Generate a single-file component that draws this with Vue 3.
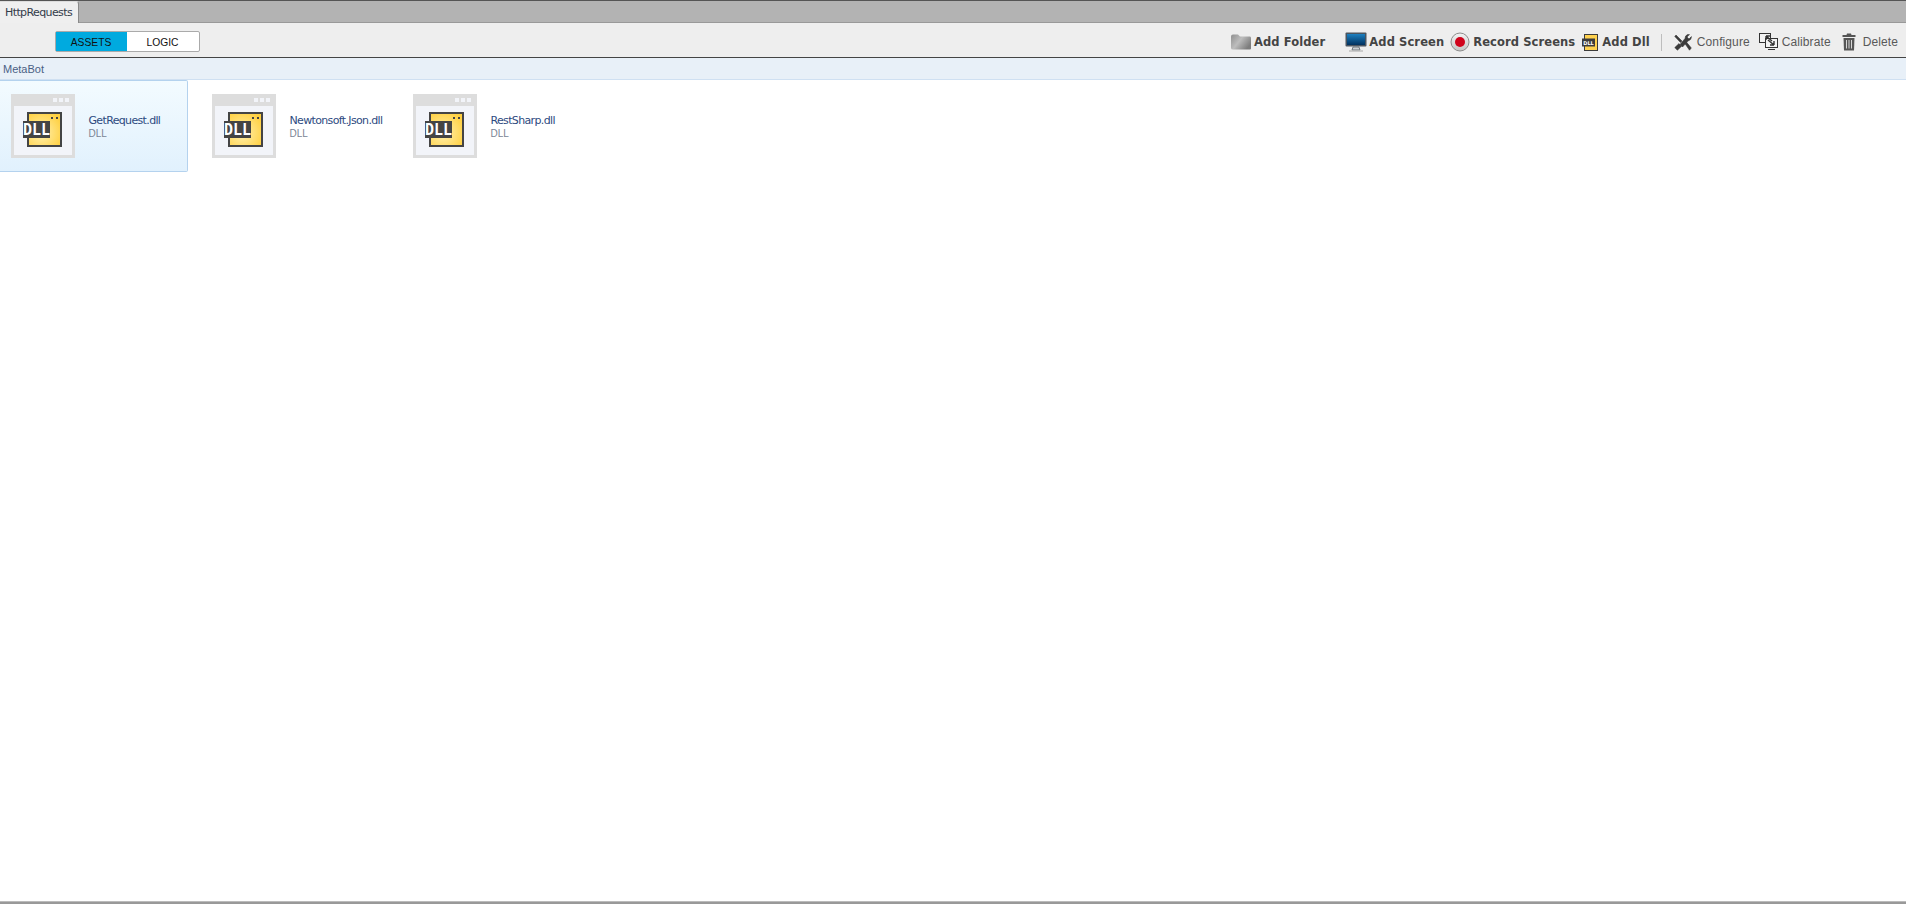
<script setup>
const items = [
  { name: 'GetRequest.dll', selected: true },
  { name: 'Newtonsoft.Json.dll', selected: false },
  { name: 'RestSharp.dll', selected: false }
]
</script>

<template>
  <div class="page">
    <div class="tabbar">
      <div class="tab">HttpRequests</div>
    </div>
    <div class="toolbar">
      <div class="toggle">
        <div class="seg on">ASSETS</div>
        <div class="seg">LOGIC</div>
      </div>
      <div class="actions">
        <div class="act bold a-folder">
          <svg width="22" height="18" viewBox="0 0 22 18">
            <defs><linearGradient id="fg" x1="0" y1="0" x2="1" y2="0.6"><stop offset="0" stop-color="#8f8f8f"/><stop offset="0.5" stop-color="#bdbdbd"/><stop offset="1" stop-color="#7d7d7d"/></linearGradient></defs>
            <path d="M1 3.5 Q1 1.5 3 1.5 H8 L10 3.5 H20 Q21 3.5 21 5 V15.5 Q21 16.5 20 16.5 H3 Q1 16.5 1 15 Z" fill="url(#fg)"/>
          </svg>
          <span>Add Folder</span>
        </div>
        <div class="act bold a-screen">
          <svg width="22" height="20" viewBox="0 0 22 20">
            <defs><linearGradient id="sg" x1="0" y1="0" x2="0" y2="1"><stop offset="0" stop-color="#1d80c0"/><stop offset="1" stop-color="#00315f"/></linearGradient></defs>
            <rect x="0.5" y="0.5" width="21" height="14" rx="1" fill="#4a5560"/>
            <rect x="2" y="2" width="18" height="11" fill="url(#sg)"/>
            <path d="M8 15 H14 L15 18 H7 Z" fill="#c9ced2" stroke="#59636b" stroke-width="0.8"/>
            <rect x="4" y="18.4" width="14" height="1.2" fill="#b5b5b5"/>
          </svg>
          <span>Add Screen</span>
        </div>
        <div class="act bold a-record">
          <svg width="20" height="20" viewBox="0 0 20 20">
            <defs><linearGradient id="rg" x1="0" y1="0" x2="0" y2="1"><stop offset="0" stop-color="#f4f4f4"/><stop offset="1" stop-color="#c4c4c4"/></linearGradient></defs>
            <circle cx="10" cy="10" r="9" fill="url(#rg)" stroke="#8d8d8d"/>
            <circle cx="10" cy="10" r="5" fill="#d0021b"/>
          </svg>
          <span>Record Screens</span>
        </div>
        <div class="act bold a-dll">
          <svg width="16" height="17" viewBox="0 0 16 17">
            <rect x="2.5" y="0.5" width="13" height="16" fill="#ffd24f" stroke="#3c3c3c"/>
            <rect x="0" y="4.5" width="13" height="8" fill="#3c3c3c"/>
            <text x="6.5" y="10.8" class="mini">DLL</text>
          </svg>
          <span>Add Dll</span>
        </div>
        <div class="sep"></div>
        <div class="act a-conf">
          <svg width="18" height="17" viewBox="0 0 18 17">
            <path d="M2 1 L8 7 L6.5 8.5 L0.8 2.5 Z M6 10.5 L11 4.5 Q11 1.5 13.5 0.6 L15.5 0.6 L13 3 L15 5 L17.4 2.6 Q17.6 6 14 7 L8.5 13 Z" fill="#3a3a3a" stroke="#3a3a3a" stroke-width="0.6"/>
            <path d="M10.5 9 L12 7.6 L17.3 14 L15.5 16.2 Z M0.8 13.6 L5 9.6 L7.5 12.3 L3.4 16.2 Z" fill="#3a3a3a" stroke="#3a3a3a" stroke-width="0.6"/>
          </svg>
          <span>Configure</span>
        </div>
        <div class="act a-cal">
          <svg width="19" height="18" viewBox="0 0 19 18">
            <rect x="0.5" y="0.5" width="11" height="9" fill="#f2f2f2" stroke="#333"/>
            <rect x="6.5" y="5.5" width="12" height="9" fill="#f2f2f2" stroke="#333"/>
            <path d="M7 3 L13 8 M7 3 V7 M7 3 H11 M15 12 L9 7 M15 12 V8 M15 12 H11" stroke="#333" stroke-width="1.4" fill="none"/>
            <path d="M9 16.5 H16" stroke="#333"/>
          </svg>
          <span>Calibrate</span>
        </div>
        <div class="act a-del">
          <svg width="14" height="18" viewBox="0 0 14 18">
            <path d="M5 0.5 H9 L9.5 2 H13.5 V4 H0.5 V2 H4.5 Z" fill="#555"/>
            <path d="M1.5 5 H12.5 L12 17.5 H2 Z" fill="#555"/>
            <path d="M4.5 7 V15.5 M7 7 V15.5 M9.5 7 V15.5" stroke="#d6d6d6" stroke-width="1"/>
          </svg>
          <span>Delete</span>
        </div>
      </div>
    </div>
    <div class="crumb">MetaBot</div>
    <div class="list">
      <div v-for="item in items" :key="item.name" class="item" :class="{ selected: item.selected }">
        <svg class="ficon" width="64" height="64" viewBox="0 0 64 64">
          <defs>
            <radialGradient id="dg" cx="0.4" cy="0.6" r="0.7"><stop offset="0" stop-color="#fff0b0"/><stop offset="1" stop-color="#ffd040"/></radialGradient>
          </defs>
          <rect width="64" height="64" fill="#dddddd"/>
          <rect x="3" y="12" width="58" height="49" fill="#f2f4f9"/>
          <rect x="42" y="4" width="4" height="4" fill="#f2f4f9"/>
          <rect x="48" y="4" width="4" height="4" fill="#f2f4f9"/>
          <rect x="54" y="4" width="4" height="4" fill="#f2f4f9"/>
          <rect x="17" y="19" width="33" height="33" fill="url(#dg)" stroke="#444" stroke-width="2"/>
          <rect x="40" y="23" width="2" height="2" fill="#444"/>
          <rect x="45" y="23" width="2" height="2" fill="#444"/>
          <rect x="12" y="27" width="27" height="17" fill="#444"/>
          <text x="25.5" y="41" class="dll">DLL</text>
        </svg>
        <div class="meta">
          <div class="name">{{ item.name }}</div>
          <div class="type">DLL</div>
        </div>
      </div>
    </div>
    <div class="foot"></div>
  </div>
</template>

<style>
html, body { margin: 0; padding: 0; background: #fff; overflow: hidden; }
</style>

<style scoped>
.page {
  width: 1906px;
  height: 904px;
  display: flex;
  flex-direction: column;
  font-family: "Liberation Sans", Arial, sans-serif;
  background: #fff;
  overflow: hidden;
}
.tabbar {
  flex: none;
  background: #b3b3b3;
  border-top: 1px solid #555;
  border-bottom: 1px solid #999;
  box-sizing: border-box;
  height: 23px;
  display: flex;
}
.tab {
  width: 79px;
  height: 22px;
  box-sizing: border-box;
  background: #efefef;
  border-right: 1px solid #8a8a8a;
  border-top: 1px solid #ddd;
  border-top-right-radius: 3px;
  padding: 2px 0 0 5px;
  font: 11px/17px "DejaVu Sans", sans-serif;
  letter-spacing: -0.6px;
  color: #333c4a;
}
.toolbar {
  height: 34px;
  flex: none;
  background: #eeeeee;
  border-bottom: 1px solid #444;
  display: flex;
  align-items: center;
}
.toggle {
  margin-left: 55px;
  width: 145px;
  height: 21px;
  box-sizing: border-box;
  border: 1px solid #aaa;
  border-radius: 2px;
  display: flex;
  background: #fff;
  margin-top: 3px;
}
.seg {
  width: 72px;
  text-align: center;
  font-size: 10.3px;
  line-height: 21px;
  color: #111;
  padding-right: 1px;
  box-sizing: border-box;
}
.seg.on { background: #00aadf; width: 71px; }
.actions {
  margin-left: auto;
  display: flex;
  align-items: center;
  padding-right: 8px;
  margin-top: 4px;
}
.act {
  display: flex;
  align-items: center;
  gap: 3px;
  font-size: 12px;
  letter-spacing: 0.1px;
  color: #595959;
  white-space: nowrap;
}
.act.bold {
  font: bold 11.5px "DejaVu Sans", sans-serif;
  letter-spacing: 0.1px;
  color: #444;
}
.act.a-folder { gap: 2px; }
.act.a-screen { margin-left: 20px; gap: 2px; }
.act.a-record { margin-left: 6px; gap: 3px; }
.act.a-dll { margin-left: 7px; gap: 4px; }
.act.a-conf { margin-left: 12px; gap: 5px; }
.act.a-cal { margin-left: 9px; gap: 4px; }
.act.a-del { margin-left: 11px; gap: 7px; }
.sep {
  width: 1px;
  height: 17px;
  background: #bdbdbd;
  margin-left: 11px;
}
.mini {
  font: bold 5px "DejaVu Sans", sans-serif;
  letter-spacing: 0;
  fill: #fff;
  text-anchor: middle;
}
.crumb {
  height: 22px;
  flex: none;
  box-sizing: border-box;
  background: #e8f0f8;
  border-bottom: 1px solid #cfe0f2;
  padding: 1px 0 0 3px;
  font-size: 11px;
  line-height: 21px;
  color: #4a5f85;
}
.list {
  flex: 1;
  display: flex;
  gap: 13px;
  align-items: flex-start;
}
.item {
  width: 188px;
  height: 92px;
  box-sizing: border-box;
  display: flex;
  align-items: flex-start;
  padding: 13px 0 0 11px;
  border: 1px solid transparent;
  border-left: 0;
}
.item.selected {
  background: linear-gradient(#f3fbff, #e1f1fd);
  border-color: #b4d2ee;
  border-radius: 0 2px 2px 0;
}
.ficon { flex: none; }
.meta {
  margin-left: 13.5px;
  padding-top: 20px;
}
.name {
  font: 11px/14px "DejaVu Sans", sans-serif;
  letter-spacing: -0.65px;
  color: #2d4a80;
}
.type {
  font-size: 10px;
  line-height: 11px;
  color: #7a8494;
}
.dll {
  font: bold 15px "DejaVu Sans Mono", monospace;
  fill: #fff;
  text-anchor: middle;
}
.foot {
  height: 3px;
  flex: none;
  background: #999;
  border-top: 1px solid #bbb;
  box-sizing: border-box;
}
</style>
